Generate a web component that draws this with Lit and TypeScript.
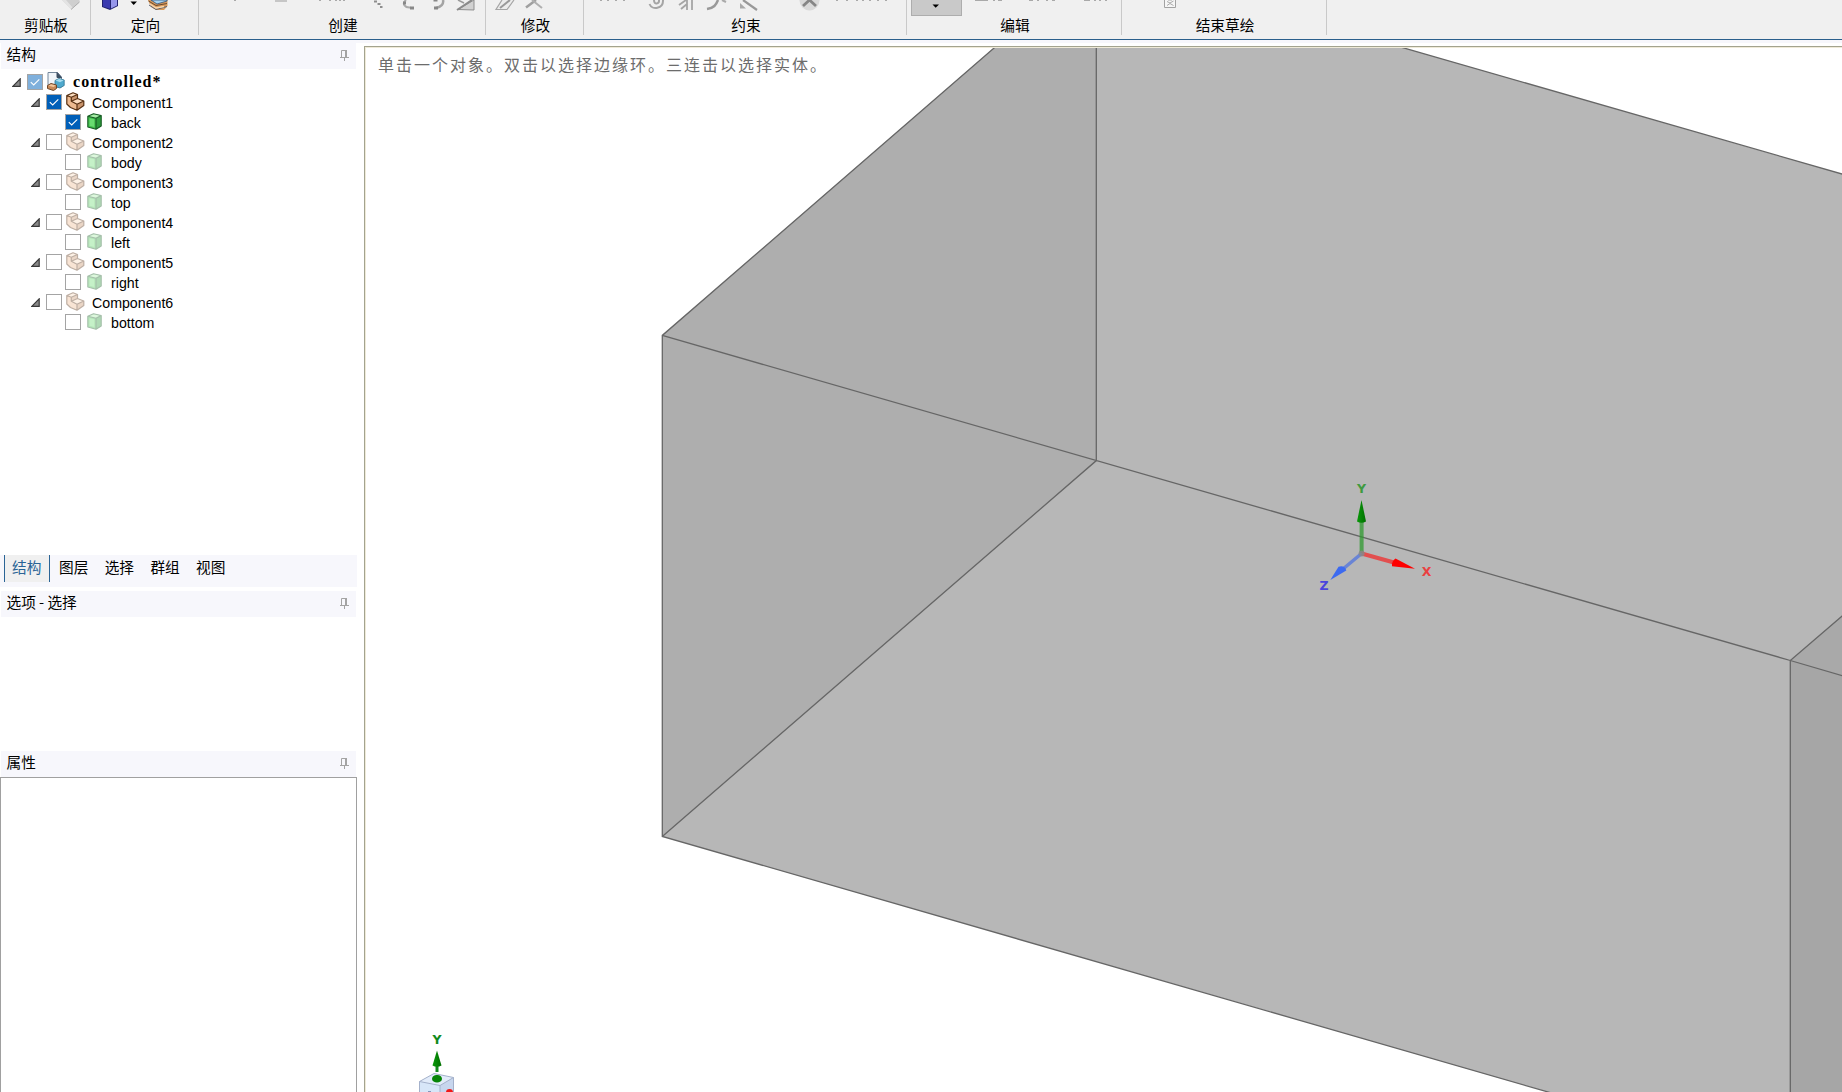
import { LitElement, html, css, svg, nothing, type TemplateResult } from "lit";
import { customElement, property } from "lit/decorators.js";

interface RibbonGroup {
  label: string;
  x: number;
  width: number;
  art: unknown;
}

const textBits = (xs: number[]) =>
  xs.map((x) => svg`<path d="M${x} 0.5h2" stroke="#a9a9a9" stroke-width="1"/>`);

const GROUPS: RibbonGroup[] = [
  {
    label: "剪贴板",
    x: 0,
    width: 91,
    art: svg`
      <path d="M62 0L71.500 9.500L79.500 2V0Z" fill="#cfcfcf"/>
      <path d="M62 0L71.500 9.500L73 8L66 0Z" fill="#e3e3e3"/>
      <path d="M71 9.500L79.500 2" stroke="#adadad" fill="none"/>`,
  },
  {
    label: "定向",
    x: 91,
    width: 108,
    art: svg`
      <path d="M102 0H118V6L110 10L102 7Z" fill="#23236f"/>
      <path d="M103 0H110V8.800L103 6.500Z" fill="#3b3bb0"/>
      <path d="M111 0H117V5.500L111 8.600Z" fill="#9696ea"/>
      <path d="M130.500 1.500H137L133.700 5Z" fill="#000"/>
      <path d="M148 0L151 7L156 10H164L167.500 6V0Z" fill="#d99a5b"/>
      <path d="M148.500 1L156 5.500L167 3.500" stroke="#6b4a30" fill="none"/>
      <path d="M149 5L156 9.500L167 6.500" stroke="#5a6474" fill="none"/>
      <path d="M151 0L157 4L167 1V0Z" fill="#a6d3f0" stroke="#35537a" stroke-width=".8"/>
      <path d="M150 4L156 8L164 6.500" stroke="#f6d8b2" stroke-width="1.500" fill="none"/>`,
  },
  {
    label: "创建",
    x: 199,
    width: 287,
    art: svg`
      ${textBits([234, 319, 329, 335, 339, 343])}
      <path d="M275 1H287" stroke="#9c9c9c"/>
      <path d="M374 1.500h3M377.500 4h3M380 7h2.500" stroke="#8e8e8e" stroke-width="2"/>
      <path d="M406 0C401.500 4 405 8 410.500 7.500" stroke="#aaa" stroke-width="2" fill="none"/>
      <path d="M403 3h3M410 8h4" stroke="#888" stroke-width="3"/>
      <path d="M443 0C444 4 441 7 436 8" stroke="#a4a4a4" stroke-width="2.500" fill="none"/>
      <path d="M433.500 0h4M434 8h4" stroke="#888" stroke-width="3"/>
      <path d="M458 9.500L474 0V10L458 9.500Z" fill="#d2d2d2" stroke="#8f8f8f"/>
      <path d="M457 10L472 0" stroke="#8a8a8a" stroke-width="2" fill="none"/>
      <path d="M458 0L464 3" stroke="#999" stroke-width="1.500" fill="none"/>`,
  },
  {
    label: "修改",
    x: 486,
    width: 98,
    art: svg`
      <path d="M502 0L496 9.500H507L514 0" fill="#ececec" stroke="#a5a5a5" stroke-width="1.200"/>
      <path d="M500 8L510 0" stroke="#999" stroke-width="2"/>
      <path d="M526 7.500L536 0" stroke="#a0a0a0" stroke-width="2.500"/>
      <path d="M532 0L542 8" stroke="#b0b0b0" stroke-width="2"/>`,
  },
  {
    label: "约束",
    x: 584,
    width: 323,
    art: svg`
      ${textBits([600, 607, 615, 623, 836, 846, 856, 862, 869, 877, 885])}
      <path d="M649.500 4C652 10.500 663.500 9 663 0M654 0C654 5.500 659.500 4 659 0" stroke="#a5a5a5" stroke-width="2" fill="none"/>
      <path d="M679 5L686 0M681 9L687 4M687 0V10M692 0V10" stroke="#a5a5a5" stroke-width="1.800" fill="none"/>
      <path d="M707 9C714 8 716 5 718 0" stroke="#999" stroke-width="2.500" fill="none"/>
      <path d="M722 0L726 2" stroke="#aaa" stroke-width="2"/>
      <path d="M740 3V8.500H746Z" fill="#a8a8a8"/>
      <path d="M743 0L757 10" stroke="#989898" stroke-width="2.200"/>
      <circle cx="809.500" cy="0.500" r="10" fill="#d9d9d9"/>
      <path d="M803 6L809.500 0L816 6" stroke="#858585" stroke-width="2.800" fill="none"/>`,
  },
  {
    label: "编辑",
    x: 907,
    width: 215,
    art: svg`
      <rect x="911.500" y="-1" width="50" height="16.500" fill="#c9c9c9" stroke="#adadad"/>
      <path d="M932.500 4.500H939L935.700 7.800Z" fill="#000"/>
      <path d="M975 .5h13M993 .5h2M998 .5h4M1029 .5h4M1037 .5h2M1046 .5h2M1052 .5h3M1084 .5h6M1094 .5h2M1099 .5h2M1105 .5h2" stroke="#a9a9a9"/>`,
  },
  {
    label: "结束草绘",
    x: 1122,
    width: 205,
    art: svg`
      <path d="M1164.500 0V7.500H1175.500V0" fill="#f6f6f6" stroke="#a2a2a2"/>
      <path d="M1167 1.500L1170 3L1173.500 1M1167 5.500L1170 3.500L1173.500 5.500M1168 0h4" stroke="#a9a9a9" fill="none"/>`,
  },
];

@customElement("ribbon-bar")
class RibbonBar extends LitElement {
  static styles = css`
    :host {
      display: block;
      height: 39px;
      background: #f0f0f0;
      border-bottom: 1px solid #2a5f8c;
      overflow: hidden;
    }
    .bar {
      display: flex;
      height: 35px;
    }
    .group {
      box-sizing: border-box;
      border-right: 1px solid #c9c9c9;
      display: flex;
      flex-direction: column;
      height: 35px;
      flex: none;
    }
    .art {
      display: block;
      width: 100%;
      height: 16px;
      flex: none;
    }
    .label {
      text-align: center;
      font-size: 14.67px;
      line-height: 18px;
      padding-left: 2px;
      height: 18px;
    }
  `;
  render() {
    return html`<div class="bar">
      ${GROUPS.map(
        (g) => html`<div class="group" style="width:${g.width}px">
          <svg class="art" viewBox="${g.x} 0 ${g.width - 1} 16" preserveAspectRatio="xMinYMin">${g.art}</svg>
          <div class="label">${g.label}</div>
        </div>`
      )}
    </div>`;
  }
}

@customElement("panel-header")
class PanelHeader extends LitElement {
  @property() caption = "";
  static styles = css`
    :host {
      display: flex;
      align-items: center;
      justify-content: space-between;
      box-sizing: border-box;
      height: 26px;
      margin: 0 1px 0 1px;
      padding: 0 7px 4px 5.5px;
      background: #f7f7fc;
      font-size: 14.67px;
      line-height: 22px;
    }
    .pin {
      width: 9px;
      height: 11px;
      display: block;
      margin-top: 2px;
    }
  `;
  render() {
    return html`<span>${this.caption}</span>
      <svg class="pin" viewBox="0 0 9 11">
        <path d="M1.500 7V.5H6.500V7M0 7.500H9M4.500 8V11" fill="none" stroke="#a3a3a3" />
        <path d="M6 0V7" stroke="#a3a3a3" stroke-width="2" />
      </svg>`;
  }
}

type Kind = "document" | "component" | "solid";
interface Row {
  kind: Kind;
  text: string;
  check: "on" | "partial" | "off";
}

const ROWS: Row[] = [
  { kind: "document", text: "controlled*", check: "partial" },
  ...["back", "body", "top", "left", "right", "bottom"].flatMap((name, i): Row[] => {
    const check = i === 0 ? "on" : "off";
    return [
      { kind: "component", text: `Component${i + 1}`, check },
      { kind: "solid", text: name, check },
    ];
  }),
];

const ICONS: Record<Kind, TemplateResult> = {
  document: html`<svg class="icon document" viewBox="0 0 18 20">
    <path d="M1 16V1.500H10.500L14.500 6V16Z" fill="#f1f5f9" stroke="#75889c" />
    <path d="M10 1.500V6.500H14.500Z" fill="#3c4f62" stroke="#3c4f62" />
    <path d="M8 9.500L12 7.500L17.200 9V14.500L13 17L8 15.500Z" fill="#4fa9cd" stroke="#2e7391" stroke-width=".8" />
    <path d="M8.500 9.600L12 8L16.700 9.200L13 11.300Z" fill="#a8ddf0" />
    <path d="M.5 14.500L4 12.500L9.500 14V17.500L6.500 19.500L.5 17.500Z" fill="#c98a58" stroke="#6f4728" />
    <path d="M1.500 14.700L4 13.300L8.800 14.600L6.500 16Z" fill="#f2c79d" />
  </svg>`,
  component: html`<svg class="icon component" viewBox="0 0 19 19">
    <path d="M.8 3.500L7 .8L11.500 2.500V6.500L17.800 9V13.500L11 18.200L4.500 15.500L.8 12Z" fill="#c9946c" />
    <path d="M.8 3.500L7 .8L11.500 2.500L5.300 5.200ZM5.300 9.300L11.500 6.500L17.800 9L11 12.300Z" fill="#fbdcc0" />
    <path d="M.8 3.500L5.300 5.200V9.300L11 12.300V18.200L4.500 15.500L.8 12Z" fill="#edba90" />
    <path
      d="M.8 3.500L7 .8L11.500 2.500V6.500L17.800 9V13.500L11 18.200L4.500 15.500L.8 12ZM.8 3.500L5.300 5.200L11.500 2.500M5.300 5.200V9.300L11 12.300L17.800 9M5.300 9.300L11.500 6.500M11 12.300V18.200"
      fill="none" stroke="#573013" stroke-width="1.200" stroke-linejoin="round"
    />
  </svg>`,
  solid: html`<svg class="icon solid" viewBox="0 0 15 17">
    <path d="M.8 3.300L6.500 .8L14.200 2.500V13L9 16.200L.8 14Z" fill="#3fbc4b" />
    <path d="M.8 3.300L6.500 .8L14.200 2.500L9 5.300Z" fill="#a5eda5" />
    <path d="M9 5.300L14.200 2.500V13L9 16.200Z" fill="#2c9c3c" />
    <path d="M2.500 5.200L7.300 6.300V14L2.500 12.800Z" fill="#68dc70" />
    <path
      d="M.8 3.300L6.500 .8L14.200 2.500V13L9 16.200L.8 14ZM.8 3.300L9 5.300L14.200 2.500M9 5.300V16.200"
      fill="none" stroke="#175a24" stroke-width="1.100" stroke-linejoin="round"
    />
  </svg>`,
};

@customElement("structure-tree")
class StructureTree extends LitElement {
  static styles = css`
    :host {
      display: block;
      padding-top: 3px;
      color: #000;
    }
    .row {
      display: flex;
      align-items: center;
      height: 20px;
      padding-left: 11.5px;
      font: 14.2px/20px "Liberation Sans", Arial, sans-serif;
      white-space: nowrap;
    }
    .row.component {
      padding-left: 30.5px;
    }
    .row.solid {
      padding-left: 65px;
    }
    .expander {
      width: 9px;
      height: 9px;
      flex: none;
      margin-right: 6.5px;
    }
    .box {
      box-sizing: border-box;
      width: 16px;
      height: 16px;
      border: 1px solid #a4a4a4;
      background: #fff;
      flex: none;
    }
    .box svg {
      display: block;
      width: 14px;
      height: 14px;
    }
    .box.on {
      background: #005fb8;
    }
    .box.partial {
      background: #7fb0dc;
    }
    .icon {
      flex: none;
      display: block;
    }
    .icon.document {
      width: 18px;
      height: 20px;
      margin: -2px 8px 0 4px;
    }
    .icon.component {
      width: 19px;
      height: 19px;
      margin: -1px 7px 0 4px;
    }
    .icon.solid {
      width: 15px;
      height: 17px;
      margin: -2px 9px 0 6px;
    }
    .off .icon {
      opacity: 0.38;
    }
    .text {
      padding-top: 2px;
    }
    .document .text {
      font: bold 16px/20px "Liberation Serif", serif;
      letter-spacing: 1.05px;
      padding-top: 0;
    }
  `;
  render() {
    return ROWS.map(
      (r) => html`<div class="row ${r.kind} ${r.check}">
        ${r.kind === "solid"
          ? nothing
          : html`<svg class="expander" viewBox="0 0 9 9">
              <path d="M.8 8.300L8.200 .8V8.300Z" fill="#8a8a8a" stroke="#3a3a3a" stroke-width="1.200" />
            </svg>`}
        <span class="box ${r.check}">
          ${r.check === "off"
            ? nothing
            : html`<svg viewBox="0 0 14 14">
                <path d="M2.800 7.200L5.700 10L11.300 4.300" fill="none" stroke="#fff" stroke-width="1.100" />
              </svg>`}
        </span>
        ${ICONS[r.kind]}
        <span class="text">${r.text}</span>
      </div>`
    );
  }
}

@customElement("model-view")
class ModelView extends LitElement {
  static styles = css`
    :host {
      display: block;
      position: relative;
      overflow: hidden;
      background: #fff;
      border-left: 1px solid #a3a38f;
      border-top: 1px solid #a3a38f;
      box-shadow: inset 1px 1px 0 #efead8;
    }
    .scene {
      display: block;
      width: 1477px;
      height: 1045px;
    }
    .hint {
      position: absolute;
      left: 13px;
      top: 5px;
      font-size: 16px;
      line-height: 24px;
      letter-spacing: 2px;
      color: #6c6c6c;
      white-space: nowrap;
    }
    .edge {
      fill: none;
      stroke: #666;
      stroke-width: 1.3;
    }
    .axis {
      font: bold 12.5px "DejaVu Sans", "Open Sans", sans-serif;
      text-anchor: middle;
    }
  `;
  render() {
    return html`<svg class="scene" viewBox="365 47 1477 1045">
        <defs>
          <clipPath id="inner"><rect x="366" y="48" width="1476" height="1044" /></clipPath>
          <linearGradient id="gy" x1="0" x2="1">
            <stop offset="0" stop-color="#0a9a0a" />
            <stop offset="1" stop-color="#006f00" />
          </linearGradient>
        </defs>
        <g clip-path="url(#inner)">
          <path d="M994 48L662.300 335.400V836.400L1548 1092H1842V174L1404 48Z" fill="#b7b7b7" />
          <path d="M994 48L662.300 335.400V836.400L1096.300 460.600V48Z" fill="#aeaeae" />
          <path d="M1790.300 660.500L1842 616V675.500Z" fill="#a9a9a9" />
          <path d="M1790.300 660.500L1842 675.500V1092H1790.300Z" fill="#a6a6a6" />
          <path
            class="edge"
            d="M995.200 47L662.300 335.400V836.400L1551.500 1093M662.300 836.400L1096.300 460.600V47M662.300 335.400L1790.300 660.500L1843 675.900M1790.300 1093V660.500L1843 615.200M1400.500 47L1843 174.300"
          />
          <path d="M1361.600 553V521" stroke="#2f9a2f" stroke-opacity=".75" stroke-width="4" />
          <path d="M1361.600 553.500L1394 562.500" stroke="#ec3434" stroke-opacity=".8" stroke-width="4" />
          <path d="M1361.600 553.500L1343 569" stroke="#5577dc" stroke-opacity=".8" stroke-width="3.500" />
          <circle cx="1361.600" cy="553.500" r="3" fill="#888" fill-opacity=".85" />
          <path d="M1361.500 500L1357 521.500Q1361.500 524 1366 521.500Z" fill="url(#gy)" />
          <path d="M1415 568.700L1395.500 558.500Q1391.500 561 1392 566.200Z" fill="#f00" />
          <path d="M1330.300 580L1338.500 566.800Q1344.500 565 1346.300 570.500Z" fill="#3c6af0" />
          <text class="axis" x="1361.600" y="492.700" fill="#3f9a3f">Y</text>
          <text class="axis" x="1426.500" y="576.400" fill="#ea4040">X</text>
          <text class="axis" x="1324" y="590" fill="#4a44dc">Z</text>

          <text class="axis" x="437" y="1044" fill="#118a1c">Y</text>
          <path d="M419.500 1081.500L434 1073.500L453.500 1077.500V1092H419.500Z" fill="#e2ecfa" />
          <path d="M419.500 1081.500L440 1085.500V1092H419.500Z" fill="#d7e6f8" />
          <path d="M440 1085.500L453.500 1077.500V1092H440Z" fill="#c7d6ee" />
          <path d="M419.500 1092V1081.500L434 1073.500L453.500 1077.500V1092M419.500 1081.500L440 1085.500L453.500 1077.500M440 1085.500V1092" fill="none" stroke="#a4b1cb" />
          <path d="M437 1066V1072" stroke="#118a1c" stroke-width="3" />
          <path d="M437 1050.500L432.500 1065.500Q437 1068 441.500 1065.500Z" fill="url(#gy)" />
          <path d="M432 1079C432 1073.500 442 1073.500 442 1079C442 1083.500 432 1083.500 432 1079Z" fill="#078507" />
          <circle cx="449.500" cy="1092.500" r="3.500" fill="#f01818" />
          <path d="M428 1091.500h3" stroke="#8497bd" />
        </g>
      </svg>
      <div class="hint">单击一个对象。双击以选择边缘环。三连击以选择实体。</div>`;
  }
}

@customElement("app-root")
class AppRoot extends LitElement {
  static styles = css`
    :host {
      display: flex;
      flex-direction: column;
      width: 1842px;
      height: 1092px;
      overflow: hidden;
      background: #fff;
      color: #000;
      font-family: "Noto Sans CJK SC", sans-serif;
    }
    .strip {
      height: 3px;
      flex: none;
      background: #f7f7fc;
    }
    ribbon-bar {
      flex: none;
    }
    .body {
      display: grid;
      grid-template-columns: 357px 1fr;
      column-gap: 7px;
      flex: 1;
      min-height: 0;
    }
    .side {
      display: flex;
      flex-direction: column;
      min-height: 0;
    }
    .side > * {
      flex: none;
    }
    structure-tree {
      height: 483px;
    }
    .tabs {
      display: flex;
      height: 32px;
      margin-bottom: 4px;
      padding-left: 4px;
      background: #f7f7fc;
      font-size: 14.67px;
      line-height: 24px;
    }
    .tab {
      box-sizing: border-box;
      width: 45.7px;
      height: 27px;
      padding-left: 9px;
    }
    .tab.active {
      width: 46px;
      padding-left: 7px;
      color: #2a6496;
      background: #f0f0f0;
      border: solid #2a6496;
      border-width: 0 1px;
    }
    .options {
      height: 134px;
    }
    .side .properties {
      flex: 1;
      border: 1px solid #a0a0a0;
      border-bottom: 0;
    }
    model-view {
      margin-top: 3px;
    }
  `;
  render() {
    return html`
      <ribbon-bar></ribbon-bar>
      <div class="strip"></div>
      <div class="body">
        <div class="side">
          <panel-header caption="结构"></panel-header>
          <structure-tree></structure-tree>
          <div class="tabs">
            ${["结构", "图层", "选择", "群组", "视图"].map(
              (t, i) => html`<div class="tab ${i === 0 ? "active" : ""}">${t}</div>`
            )}
          </div>
          <panel-header caption="选项 - 选择"></panel-header>
          <div class="options"></div>
          <panel-header caption="属性"></panel-header>
          <div class="properties"></div>
        </div>
        <model-view></model-view>
      </div>
    `;
  }
}
